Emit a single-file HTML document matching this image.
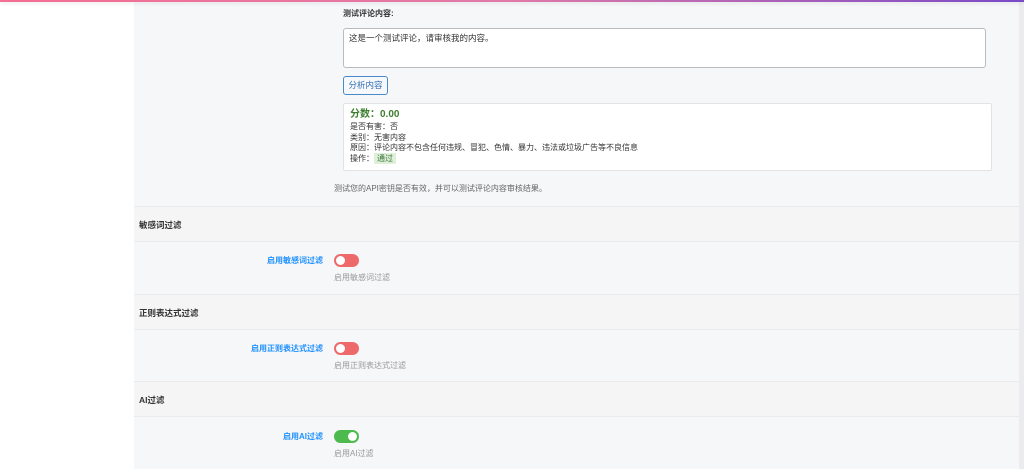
<!DOCTYPE html>
<html><head><meta charset="utf-8"><style>
*{margin:0;padding:0;box-sizing:border-box}
body{width:1024px;height:469px;overflow:hidden;background:#fff;font-family:"Liberation Sans","Noto Sans CJK SC",sans-serif;position:relative;font-size:8px;color:#333}
.bar{position:absolute;left:0;top:0;width:1024px;height:2px;background:linear-gradient(90deg,#f56e93,#e07aa8 50%,#7a4ac8);box-shadow:0 1px 4px rgba(0,0,0,.12)}
.panel{position:absolute;left:134px;top:2px;width:885px;height:467px;background:#f6f7f8}
.right{position:absolute;left:1019px;top:2px;width:5px;height:467px;background:#ececee}
.a{position:absolute;white-space:nowrap}
.hd{position:absolute;left:134px;width:885px;background:#f5f5f6;border-top:1px solid #ebebeb;border-bottom:1px solid #ebebeb}
.tg{position:absolute;width:25px;height:13px;border-radius:7px;background:#ee6a6a}
.tg::after{content:"";position:absolute;top:2px;left:2px;width:9px;height:9px;border-radius:50%;background:#fff}
.tg.on{background:#4cba4c}.tg.on::after{left:14px}
.lbl{color:#1e90ff;font-weight:bold;font-size:8px}
.hint{color:#999;font-size:8px}
</style></head><body>
<div class="panel"></div><div class="right"></div><div class="bar"></div>
<div class="a" style="left:343px;top:8px;font-weight:bold;font-size:8px">测试评论内容:</div>
<div class="a" style="left:343px;top:28px;width:643px;height:40px;background:#fff;border:1px solid #bbb;border-radius:3px;padding:3px 5px;font-size:8.5px">这是一个测试评论，请审核我的内容。</div>
<div class="a" style="left:343px;top:76px;width:45px;height:19px;border:1px solid #4a8ac9;border-radius:3px;background:#f6f8fb;color:#2f6eb0;font-size:8.5px;text-align:center;line-height:17px">分析内容</div>
<div class="a" style="left:343px;top:103px;width:649px;height:68px;background:#fff;border:1px solid #e3e3e3;border-radius:2px"></div>
<div class="a" style="left:350px;top:109px;font-weight:bold;color:#3d7d2f;font-size:10px;line-height:12px">分数：0.00</div>
<div class="a" style="left:350px;top:122px;line-height:10.5px;font-size:8px;color:#333">是否有害：否<br>类别：无害内容<br>原因：评论内容不包含任何违规、冒犯、色情、暴力、违法或垃圾广告等不良信息<br>操作：<span style="background:#dff0d8;color:#3c763d;padding:1px 3px">通过</span></div>
<div class="a" style="left:334px;top:183px;color:#666;font-size:8px">测试您的API密钥是否有效，并可以测试评论内容审核结果。</div>
<div class="hd" style="top:206px;height:36px"></div>
<div class="a" style="left:139px;top:219px;font-weight:bold;font-size:8.5px">敏感词过滤</div>
<div class="a lbl" style="right:701px;top:255px">启用敏感词过滤</div>
<div class="tg" style="left:334px;top:254px"></div>
<div class="a hint" style="left:334px;top:272px">启用敏感词过滤</div>
<div class="hd" style="top:294px;height:36px"></div>
<div class="a" style="left:139px;top:307px;font-weight:bold;font-size:8.5px">正则表达式过滤</div>
<div class="a lbl" style="right:701px;top:343px">启用正则表达式过滤</div>
<div class="tg" style="left:334px;top:342px"></div>
<div class="a hint" style="left:334px;top:360px">启用正则表达式过滤</div>
<div class="hd" style="top:381px;height:36px"></div>
<div class="a" style="left:139px;top:394px;font-weight:bold;font-size:8.5px">AI过滤</div>
<div class="a lbl" style="right:701px;top:431px">启用AI过滤</div>
<div class="tg on" style="left:334px;top:430px"></div>
<div class="a hint" style="left:334px;top:448px">启用AI过滤</div>
</body></html>
